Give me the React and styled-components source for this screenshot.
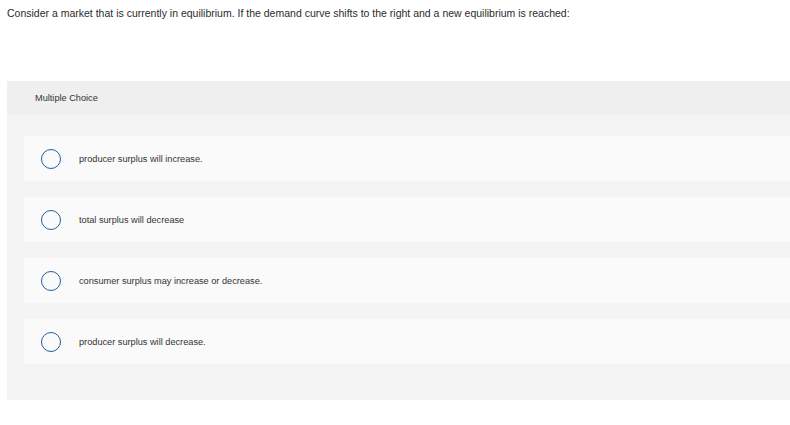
import styled, { createGlobalStyle } from "styled-components";

const GlobalStyle = createGlobalStyle`
  body {
    margin: 0;
    background: #ffffff;
    font-family: "Liberation Sans", Arial, sans-serif;
    color: #333333;
  }
`;

const Page = styled.div`
  padding: 6px 0 0 7px;
`;

const Prompt = styled.p`
  margin: 0;
  font-size: 10.5px;
  line-height: 14px;
  color: #2b2b2b;
`;

const Panel = styled.section`
  margin-top: 61px;
  background: #f4f4f4;
  padding-bottom: 36px;
`;

const PanelHeader = styled.div`
  height: 34px;
  background: #efefef;
  display: flex;
  align-items: center;
  padding-left: 28px;
  font-size: 9.2px;
  color: #333333;
`;

const Options = styled.ul`
  list-style: none;
  margin: 0;
  padding: 21px 0 0 17px;
  display: flex;
  flex-direction: column;
  gap: 16px;
`;

const Option = styled.li`
  height: 45px;
  background: #fafafa;
  display: flex;
  align-items: center;
  padding-left: 17px;
`;

const Radio = styled.span`
  width: 18px;
  height: 18px;
  border: 1.5px solid #1f5f9e;
  border-radius: 50%;
  flex-shrink: 0;
`;

const Label = styled.span`
  margin-left: 18px;
  font-size: 9.2px;
  color: #333333;
`;

const choices = [
  "producer surplus will increase.",
  "total surplus will decrease",
  "consumer surplus may increase or decrease.",
  "producer surplus will decrease.",
];

export default function App() {
  return (
    <Page>
      <GlobalStyle />
      <Prompt>
        Consider a market that is currently in equilibrium. If the demand curve
        shifts to the right and a new equilibrium is reached:
      </Prompt>
      <Panel>
        <PanelHeader>Multiple Choice</PanelHeader>
        <Options>
          {choices.map((c) => (
            <Option key={c}>
              <Radio />
              <Label>{c}</Label>
            </Option>
          ))}
        </Options>
      </Panel>
    </Page>
  );
}
